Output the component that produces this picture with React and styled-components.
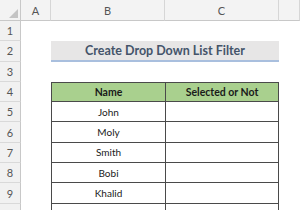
import React from 'react';
import styled, { createGlobalStyle } from 'styled-components';

const GlobalStyle = createGlobalStyle`
  html, body {
    margin: 0;
    padding: 0;
    background: #ffffff;
    overflow: hidden;
  }
  body {
    font-family: Lato, "Liberation Sans", sans-serif;
  }
`

const names = ['John', 'Moly', 'Smith', 'Bobi', 'Khalid', 'Anita'];
const columns = ['A', 'B', 'C', ''];

const Sheet = styled.div`
  display: grid;
  grid-template-columns: 21px 30px 114px 114px 1fr;
  grid-template-rows: 21px repeat(10, 20.3px);
  width: 300px;
  height: 210px;
  overflow: hidden;
`

const Corner = styled.div`
  position: relative;
  background: #f3f3f3;
  border-right: 1px solid #c8c8c8;
  border-bottom: 1px solid #c8c8c8;
  box-sizing: border-box;

  &::after {
    content: '';
    position: absolute;
    right: 2px;
    bottom: 2px;
    width: 0;
    height: 0;
    border-left: 9px solid transparent;
    border-bottom: 9px solid #c4c4c4;
  }
`

const ColHead = styled.div`
  display: flex;
  align-items: center;
  justify-content: center;
  background: #f3f3f3;
  border-right: 1px solid #d6d6d6;
  border-bottom: 1px solid #c8c8c8;
  box-sizing: border-box;
  font-size: 11px;
  color: #555;
`

const RowNum = styled.div`
  display: flex;
  align-items: center;
  justify-content: center;
  background: #f1f1f1;
  border-right: 1px solid #c8c8c8;
  border-bottom: 1px solid #d9d9d9;
  box-sizing: border-box;
  font-size: 11px;
  color: #555;
`

const Blank = styled.div`
  background: #fff;
`

const TitleCell = styled.div`
  grid-column: span 2;
  display: flex;
  align-items: center;
  justify-content: center;
  background: #e7e6e6;
  border-bottom: 2px solid #a9bfde;
  box-sizing: border-box;
  font-size: 12.5px;
  font-weight: 700;
  color: #44546a;
`

const Cell = styled.div`
  display: flex;
  align-items: center;
  justify-content: center;
  background: ${(p) => (p.head ? '#a9d08e' : '#fff')};
  border-left: 1px solid #4a4a4a;
  border-right: ${(p) => (p.last ? '1px solid #4a4a4a' : 'none')};
  border-top: ${(p) => (p.head ? '1px solid #4a4a4a' : 'none')};
  border-bottom: 1px solid #4a4a4a;
  box-sizing: border-box;
  font-size: ${(p) => (p.head ? '10.5px' : '10px')};
  font-weight: ${(p) => (p.head ? 700 : 400)};
  color: #1a1a1a;
`

const App = () => {
  return (
    <>
      <GlobalStyle />
      <Sheet>
        <Corner />
        {columns.map((c, i) => (
          <ColHead key={i}>{c}</ColHead>
        ))}

        <RowNum>1</RowNum>
        <Blank /><Blank /><Blank /><Blank />

        <RowNum>2</RowNum>
        <Blank />
        <TitleCell>Create Drop Down List Filter</TitleCell>
        <Blank />

        <RowNum>3</RowNum>
        <Blank /><Blank /><Blank /><Blank />

        <RowNum>4</RowNum>
        <Blank />
        <Cell head>Name</Cell>
        <Cell head last>Selected or Not</Cell>
        <Blank />

        {names.map((n, i) => (
          <React.Fragment key={n}>
            <RowNum>{i + 5}</RowNum>
            <Blank />
            <Cell>{n}</Cell>
            <Cell last />
            <Blank />
          </React.Fragment>
        ))}
      </Sheet>
    </>
  );
}

export default App;
